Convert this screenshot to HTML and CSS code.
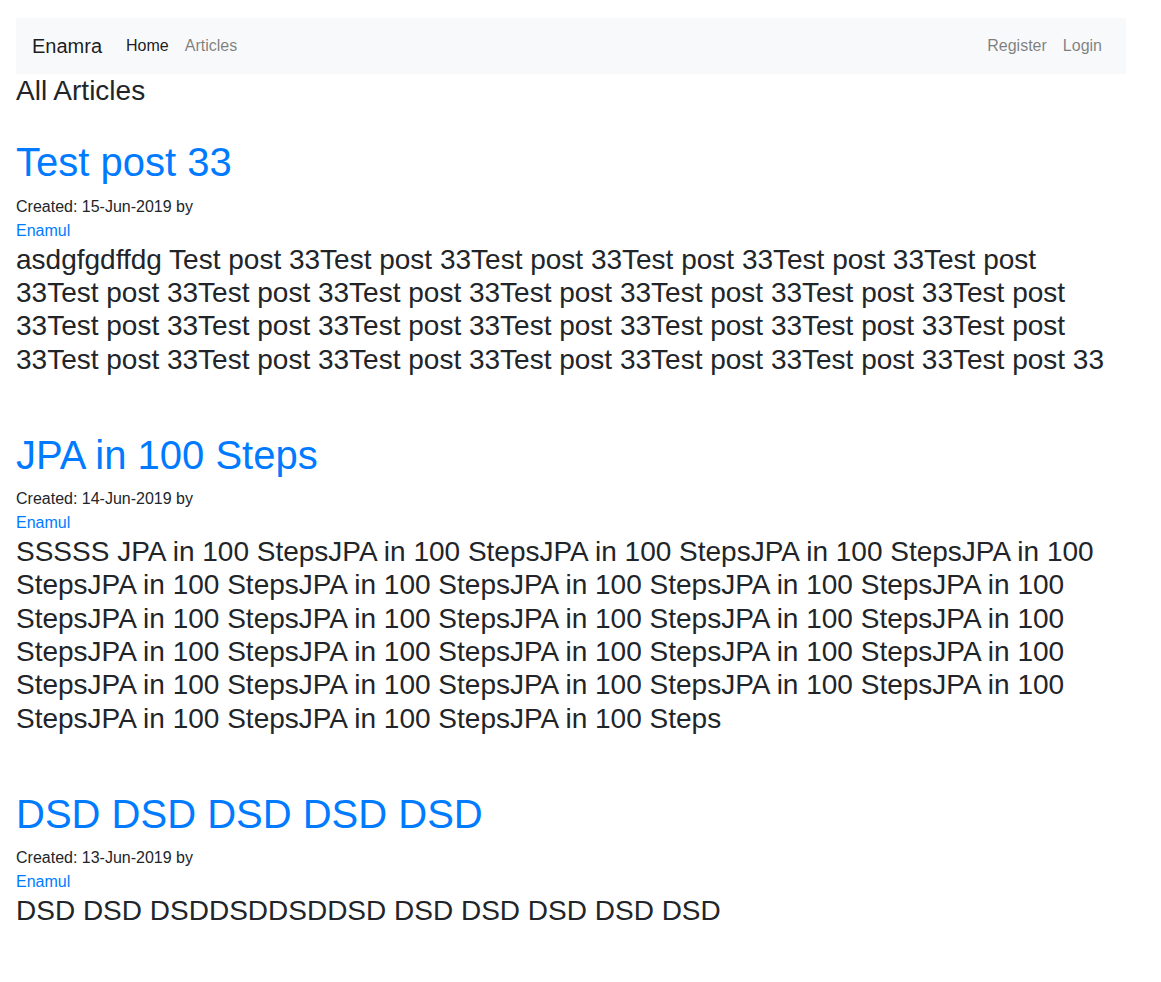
FILE: index.html
```html
<!DOCTYPE html>
<html lang="en">
<head>
<meta charset="utf-8">
<title>Enamra - All Articles</title>
<link rel="stylesheet" href="styles.css">
</head>
<body>
<div class="page">
  <nav class="navbar">
    <a class="brand" href="#">Enamra</a>
    <ul class="nav">
      <li><a class="nav-link active" href="#">Home</a></li>
      <li><a class="nav-link" href="#">Articles</a></li>
    </ul>
    <ul class="nav nav-right">
      <li><a class="nav-link" href="#">Register</a></li>
      <li><a class="nav-link" href="#">Login</a></li>
    </ul>
  </nav>

  <h3 class="page-title">All Articles</h3>

  <article class="article">
    <h1 class="article-title"><a href="#">Test post 33</a></h1>
    <div class="meta">Created: 15-Jun-2019 by</div>
    <div class="meta"><a href="#">Enamul</a></div>
    <h3 class="article-body">asdgfgdffdg Test post 33Test post 33Test post 33Test post 33Test post 33Test post 33Test post 33Test post 33Test post 33Test post 33Test post 33Test post 33Test post 33Test post 33Test post 33Test post 33Test post 33Test post 33Test post 33Test post 33Test post 33Test post 33Test post 33Test post 33Test post 33Test post 33Test post 33</h3>
  </article>

  <article class="article">
    <h1 class="article-title"><a href="#">JPA in 100 Steps</a></h1>
    <div class="meta">Created: 14-Jun-2019 by</div>
    <div class="meta"><a href="#">Enamul</a></div>
    <h3 class="article-body">SSSSS JPA in 100 StepsJPA in 100 StepsJPA in 100 StepsJPA in 100 StepsJPA in 100 StepsJPA in 100 StepsJPA in 100 StepsJPA in 100 StepsJPA in 100 StepsJPA in 100 StepsJPA in 100 StepsJPA in 100 StepsJPA in 100 StepsJPA in 100 StepsJPA in 100 StepsJPA in 100 StepsJPA in 100 StepsJPA in 100 StepsJPA in 100 StepsJPA in 100 StepsJPA in 100 StepsJPA in 100 StepsJPA in 100 StepsJPA in 100 StepsJPA in 100 StepsJPA in 100 StepsJPA in 100 StepsJPA in 100 Steps</h3>
  </article>

  <article class="article">
    <h1 class="article-title"><a href="#">DSD DSD DSD DSD DSD</a></h1>
    <div class="meta">Created: 13-Jun-2019 by</div>
    <div class="meta"><a href="#">Enamul</a></div>
    <h3 class="article-body">DSD DSD DSDDSDDSDDSD DSD DSD DSD DSD DSD</h3>
  </article>
</div>
</body>
</html>
```

FILE: styles.css
```css
* {
  box-sizing: border-box;
}

html, body {
  margin: 0;
  padding: 0;
  background: #fff;
}

body {
  font-family: "Liberation Sans", Arial, "Helvetica Neue", sans-serif;
  font-size: 16px;
  line-height: 1.5;
  color: #212529;
}

a {
  color: #007bff;
  text-decoration: none;
}

.page {
  width: 1110px;
  margin: 18px 0 0 16px;
  padding-bottom: 40px;
}

.navbar {
  display: flex;
  align-items: center;
  background: #f8f9fa;
  padding: 8px 16px;
  height: 56px;
}

.brand {
  font-size: 20px;
  line-height: 30px;
  padding: 5px 0;
  margin-right: 16px;
  color: rgba(0, 0, 0, 0.9);
}

.nav {
  display: flex;
  list-style: none;
  margin: 0;
  padding: 0;
}

.nav-right {
  margin-left: auto;
}

.nav-link {
  display: block;
  padding: 8px;
  line-height: 24px;
  color: rgba(0, 0, 0, 0.5);
}

.nav-link.active {
  color: rgba(0, 0, 0, 0.9);
}

.page-title,
.article-body {
  font-size: 28px;
  line-height: 33.32px;
  font-weight: 400;
  margin: 0 0 8px 0;
  color: #212529;
}

.article {
  padding-top: 24px;
  padding-bottom: 24px;
}

.article-title {
  font-size: 40px;
  line-height: 47.28px;
  font-weight: 400;
  margin: 0 0 8px 0;
}

.meta {
  font-size: 16px;
  line-height: 24px;
}
```
